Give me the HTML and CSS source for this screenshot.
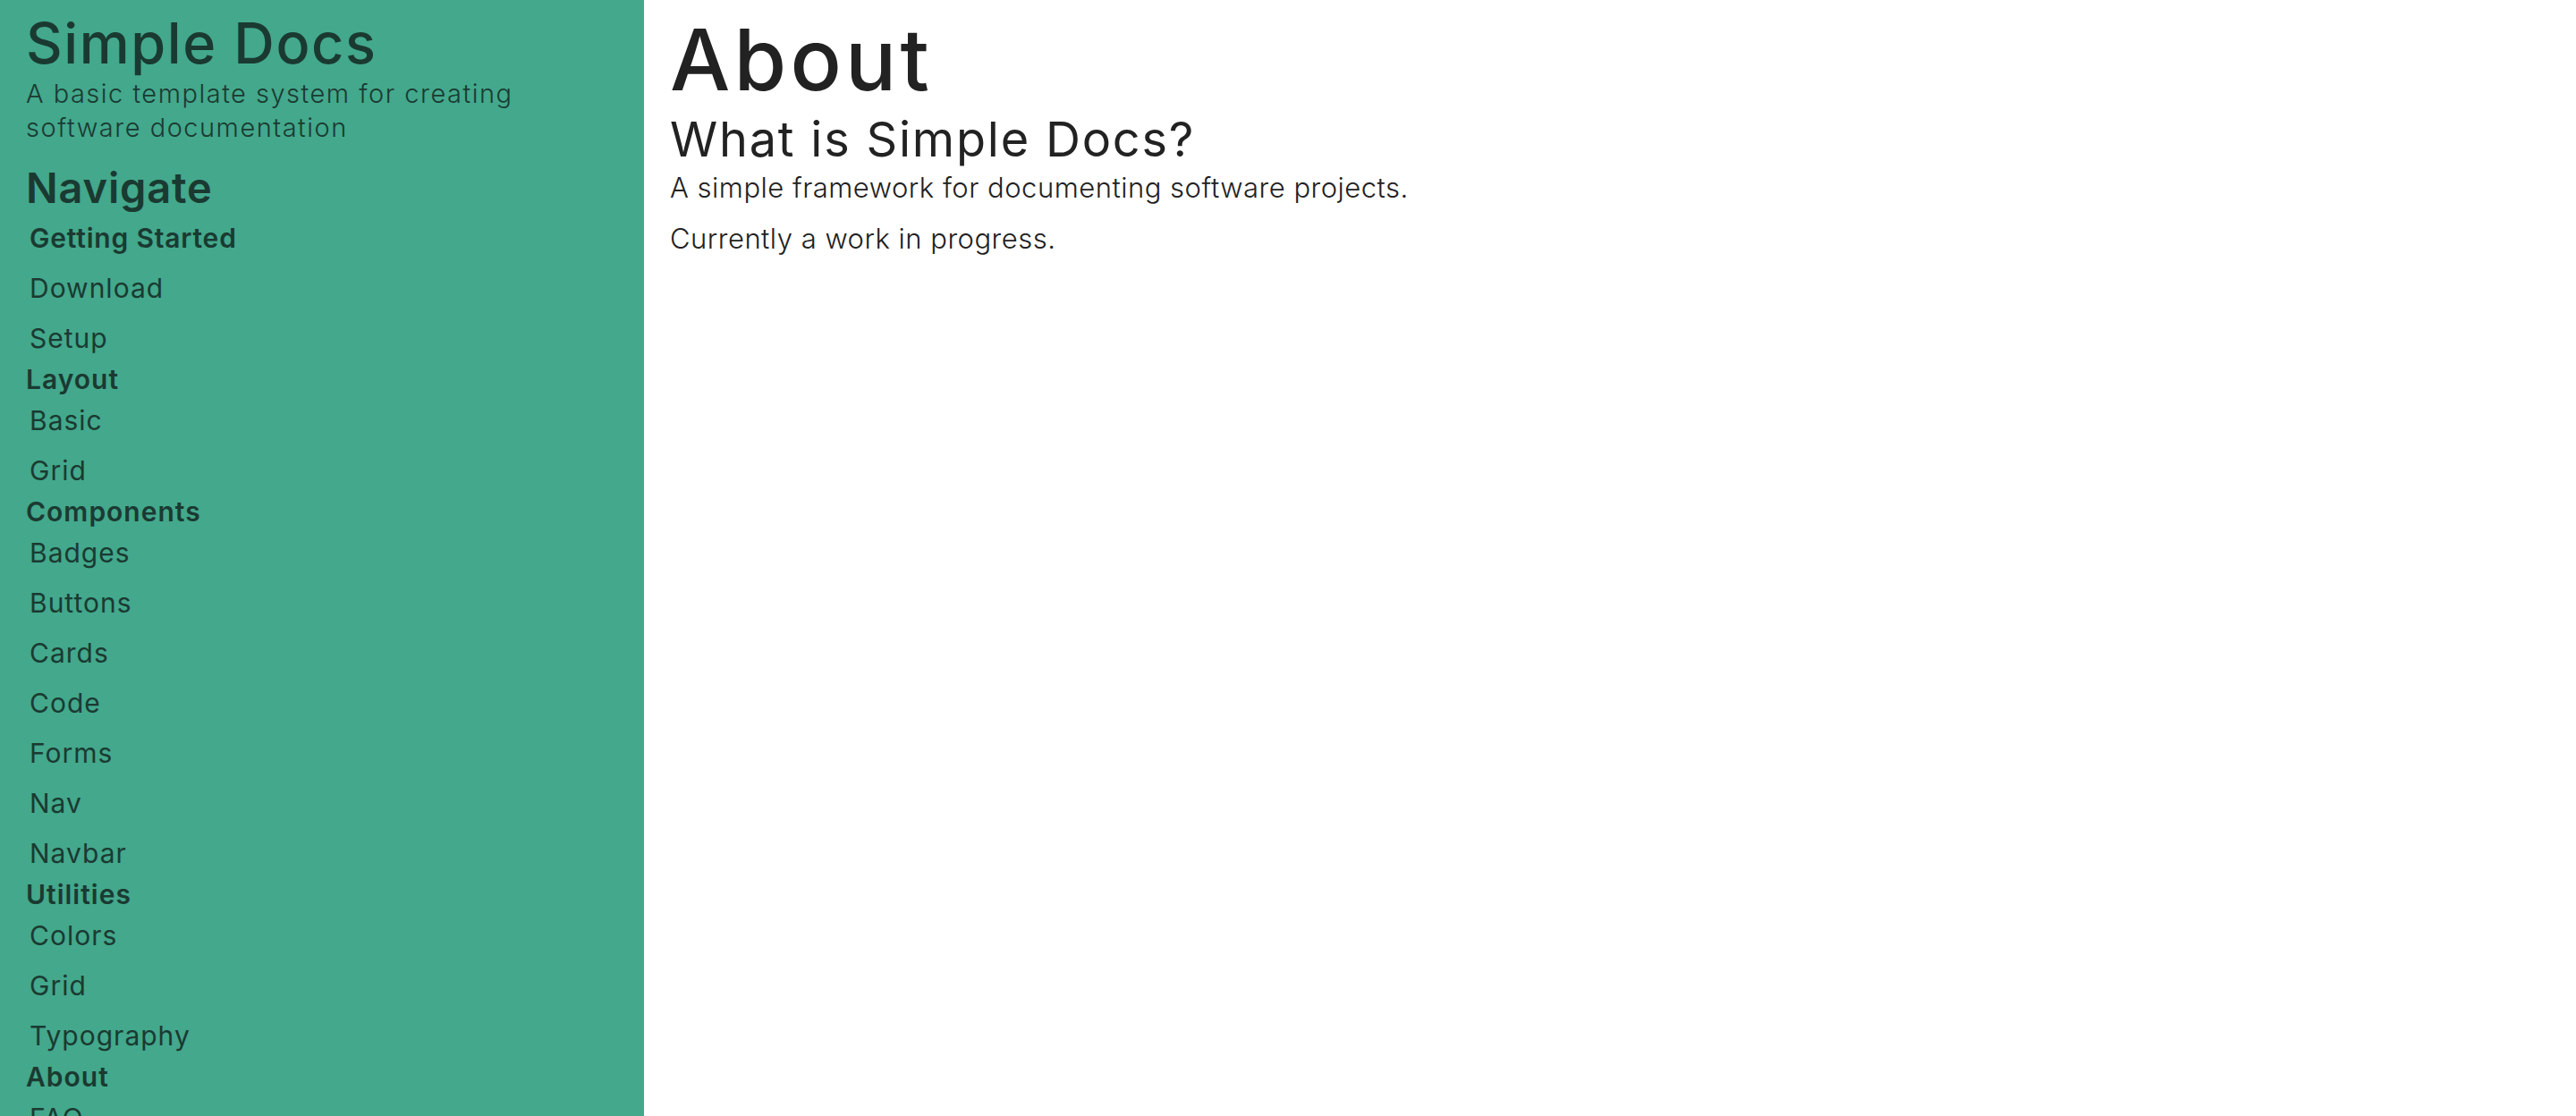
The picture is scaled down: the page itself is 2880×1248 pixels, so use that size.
FILE: index.html
```html
<!DOCTYPE html>
<html lang="en">
<head>
<meta charset="utf-8">
<title>Simple Docs - About</title>
<link rel="stylesheet" href="styles.css">
</head>
<body>
<div class="page">
  <aside class="sidebar">
    <h1 class="brand">Simple Docs</h1>
    <p class="tagline">A basic template system for creating software documentation</p>
    <h2 class="nav-title">Navigate</h2>
    <ul class="nav">
      <li class="item strong">Getting Started</li>
      <li class="item">Download</li>
      <li class="item">Setup</li>
      <li class="cat">Layout</li>
      <li class="item">Basic</li>
      <li class="item">Grid</li>
      <li class="cat">Components</li>
      <li class="item">Badges</li>
      <li class="item">Buttons</li>
      <li class="item">Cards</li>
      <li class="item">Code</li>
      <li class="item">Forms</li>
      <li class="item">Nav</li>
      <li class="item">Navbar</li>
      <li class="cat">Utilities</li>
      <li class="item">Colors</li>
      <li class="item">Grid</li>
      <li class="item">Typography</li>
      <li class="cat">About</li>
      <li class="item">FAQ</li>
    </ul>
  </aside>
  <main class="content">
    <h1 class="page-title">About</h1>
    <h2 class="section-title">What is Simple Docs?</h2>
    <p class="text">A simple framework for documenting software projects.</p>
    <p class="text">Currently a work in progress.</p>
  </main>
</div>
</body>
</html>
```

FILE: styles.css
```css
html, body {
  margin: 0;
  padding: 0;
  background: #ffffff;
}

body {
  font-family: Inter, "Noto Sans", "DejaVu Sans", sans-serif;
  color: #222222;
}

.page {
  display: flex;
  min-height: 100vh;
}

.sidebar {
  width: 720px;
  flex: 0 0 720px;
  box-sizing: border-box;
  background: #43a88c;
  color: #1a3a31;
  padding: 10px 0 0 29px;
}

.brand {
  margin: 0;
  font-size: 63px;
  font-weight: 500;
  line-height: 76px;
  letter-spacing: 1.6px;
}

.tagline {
  margin: 0;
  font-size: 29px;
  font-weight: 300;
  line-height: 38px;
  width: 600px;
  letter-spacing: 1.5px;
}

.nav-title {
  margin: 20px 0 0;
  font-size: 47px;
  font-weight: 600;
  line-height: 56px;
  letter-spacing: 0.8px;
}

.nav {
  list-style: none;
  margin: 0;
  padding: 0;
}

.item {
  font-size: 30px;
  font-weight: 400;
  line-height: 56px;
  padding-left: 4px;
  letter-spacing: 1px;
}

.item.strong {
  font-weight: 600;
  padding-left: 4px;
  letter-spacing: 0.8px;
}

.cat {
  font-size: 30px;
  font-weight: 600;
  line-height: 36px;
  letter-spacing: 1px;
}

.content {
  flex: 1;
  padding: 10px 0 0 29px;
}

.page-title {
  margin: 0;
  font-size: 95px;
  font-weight: 500;
  line-height: 114px;
  letter-spacing: 4.2px;
}

.section-title {
  margin: 0 0 3px;
  font-size: 54px;
  font-weight: 400;
  line-height: 64px;
  letter-spacing: 1.8px;
}

.text {
  margin: 0 0 19px;
  font-size: 31px;
  font-weight: 300;
  line-height: 38px;
  letter-spacing: 0.5px;
}
```
